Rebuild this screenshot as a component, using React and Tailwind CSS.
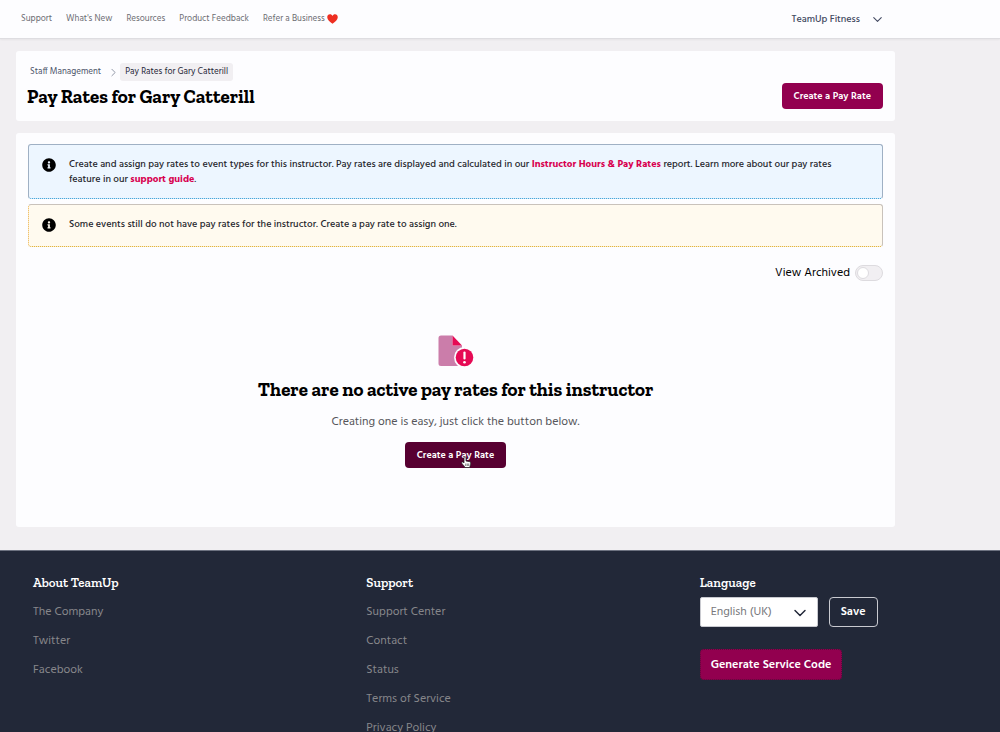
import { useState } from "react";
import { ChevronDown, ChevronRight } from "lucide-react";
import { FaInfoCircle } from "react-icons/fa";

const navLinks = ["Support", "What's New", "Resources", "Product Feedback"];

const aboutLinks = ["The Company", "Twitter", "Facebook"];

const supportLinks = ["Support Center", "Contact", "Status", "Terms of Service", "Privacy Policy"];

export default function App() {
  const [archived, setArchived] = useState(false);

  return (
    <div className="min-h-screen overflow-hidden bg-[#f1eff2] font-['Hind','Noto_Sans',sans-serif] text-black">
      <TopBar />

      <main className="mr-[105px] ml-4 mt-3 mb-[23px] flex flex-col gap-3">
        {/* PAGE HEADER */}
        <section className="flex items-end justify-between rounded-[3px] bg-[#fdfdff] p-3 pl-[11px]">
          <div>
            <nav aria-label="Breadcrumb" className="flex items-center text-[9px] leading-[18px]">
              <a href="#staff" className="ml-[3px] text-[#4b5268]">Staff Management</a>
              <ChevronRight size={13} strokeWidth={1.75} className="ml-[6px] text-[#8d93a3]" />
              <span className="rounded-[3px] bg-[#f1eff2] px-[5px] text-[#1f2637]">Pay Rates for Gary Catterill</span>
            </nav>
            <h1 className="mt-1 font-['Roboto_Slab','Zilla_Slab','Liberation_Serif',serif] text-[19px] leading-6 font-bold">
              Pay Rates for Gary Catterill
            </h1>
          </div>
          <button className="h-[26px] rounded bg-[#92004f] px-3 text-[10px] font-semibold text-white">
            Create a Pay Rate
          </button>
        </section>

        {/* PAY RATES */}
        <section className="rounded-[3px] bg-[#fdfdff] px-3 pt-[11px] pb-[59px]">
          <div className="flex flex-col gap-[5px]">
            <Notice className="min-h-[55px] border-[#9fb0c4] border-b-[#2496d2] bg-[#edf6ff]">
              Create and assign pay rates to event types for this instructor. Pay rates are displayed and calculated in our{" "}
              <a href="#report" className="font-bold text-[#d8004f]">Instructor Hours &amp; Pay Rates</a> report. Learn more
              about our pay rates feature in our <a href="#guide" className="font-bold text-[#d8004f]">support guide</a>.
            </Notice>
            <Notice className="min-h-[43px] border-[#c9c2bb] border-b-[#dca518] border-l-[#ecb043] [border-left-style:dotted] bg-[#fffaef]">
              Some events still do not have pay rates for the instructor. Create a pay rate to assign one.
            </Notice>
          </div>

          <label className="mt-[18px] flex h-4 items-center justify-end gap-[5px] text-[12px]">
            View Archived
            <input
              type="checkbox"
              role="switch"
              checked={archived}
              onChange={(e) => setArchived(e.target.checked)}
              className="flex h-4 w-7 appearance-none items-center rounded-full border border-[#dddbdf] bg-[#f1eff2] px-px before:h-3 before:w-3 before:rounded-full before:border before:border-[#dddbdf] before:bg-white before:content-[''] checked:justify-end checked:bg-[#92004f]"
            />
          </label>

          <div className="mt-[54px] flex flex-col items-center">
            <EmptyIcon />
            <h2 className="mt-[11px] font-['Roboto_Slab','Zilla_Slab','Liberation_Serif',serif] text-[19px] leading-6 font-bold">
              There are no active pay rates for this instructor
            </h2>
            <p className="mt-[11px] text-[12px] leading-[18px] text-[#55555a]">
              Creating one is easy, just click the button below.
            </p>
            <button className="relative mt-[11px] h-[26px] rounded bg-[#570031] px-3 text-[10px] font-semibold text-white">
              Create a Pay Rate
              <HandPointer />
            </button>
          </div>
        </section>
      </main>

      <Footer />
    </div>
  );
}

function TopBar() {
  return (
    <header className="flex h-[39px] items-center justify-between border-b border-[#dedde1] bg-[#fdfdff] pr-[115px] pl-[21px] shadow-xs">
      <nav className="flex items-center gap-[14px] text-[9px] leading-[11px] text-[#6c6c72]">
        {navLinks.map((link) => <a key={link} href="#nav">{link}</a>)}
        <a href="#refer" className="flex items-center gap-[2px]">
          Refer a Business
          <svg width="11" height="10" viewBox="0 0 12 11">
            <path d="M6 10.8C3 8.600.2 6.300.2 3.500.2 1.600 1.500.3 3.200.3 4.500.3 5.500 1 6 2.100 6.500 1 7.500.3 8.800.3c1.700 0 3 1.300 3 3.200C11.800 6.300 9 8.600 6 10.800z" fill="#ee2f22" />
          </svg>
        </a>
      </nav>
      <button className="flex items-center gap-[10px] text-[10px] font-medium text-[#434a62]">
        TeamUp Fitness
        <ChevronDown size={15} strokeWidth={1.75} />
      </button>
    </header>
  );
}

function Notice({ className, children }) {
  return (
    <div className={`flex rounded-[3px] border [border-bottom-style:dotted] pt-3 pl-[13px] ${className}`}>
      <FaInfoCircle size={14} className="mt-px shrink-0" />
      <p className="ml-[13px] max-w-[780px] text-[10px] leading-[15px] font-medium text-[#26262c]">{children}</p>
    </div>
  );
}

function EmptyIcon() {
  return (
    <svg width="36" height="32" viewBox="0 0 36 32">
      <path d="M3 .5h11.500v10H24V31H3A2.500 2.500 0 0 1 .5 28.500V3A2.500 2.500 0 0 1 3 .5z" fill="#cb7daa" />
      <path d="M14.500.5 24 10.500h-9.500z" fill="#e60a55" />
      <circle cx="26.500" cy="22.500" r="10.500" fill="#fdfdff" />
      <circle cx="26.500" cy="22.500" r="8.800" fill="#e60a55" />
      <path d="M26.500 17.500v6" stroke="#fff" strokeWidth="2.200" strokeLinecap="round" />
      <circle cx="26.500" cy="27.200" r="1.300" fill="#fff" />
    </svg>
  );
}

function HandPointer() {
  return (
    <svg width="10" height="12" viewBox="0 0 20 24" className="absolute top-[14px] left-[56px]">
      <path
        d="M6 14V3.500a2 2 0 0 1 4 0V10l8 1.500c1 .3 1.500 1 1.500 2.500 0 4-1.500 5-2 9H8c-1-3-4-5-6.500-8.500C.5 12.500 3 11 4.500 12.500z"
        fill="#fff"
        stroke="#222"
        strokeWidth="1.500"
      />
      <path d="M9.500 15v5M12.500 15v5M15.500 15v5" stroke="#222" strokeWidth="1.200" />
    </svg>
  );
}

function Footer() {
  return (
    <footer className="grid grid-cols-3 border-t border-[#6d7280] bg-[#222838] pt-[23px] pb-6 text-[12px] text-[#87878b]">
      <FooterColumn title="About TeamUp" links={aboutLinks} />
      <FooterColumn title="Support" links={supportLinks} />
      <div className="pl-[33px]">
        <FooterTitle>Language</FooterTitle>
        <form className="mt-[5px] flex gap-[11px]" onSubmit={(e) => e.preventDefault()}>
          <div className="relative">
            <select
              aria-label="Language"
              className="h-[30px] w-[118px] appearance-none rounded-[2px] border border-[#c9cad0] bg-white px-[10px] text-[12px] text-[#77777b]"
            >
              <option>English (UK)</option>
            </select>
            <ChevronDown size={20} strokeWidth={1.75} className="pointer-events-none absolute top-[6px] right-2 text-[#222838]" />
          </div>
          <button className="h-[30px] rounded border border-[#c9cad0] px-[11px] font-semibold text-white">Save</button>
        </form>
        <button className="mt-[22px] h-[31px] rounded border border-dotted border-[#5a0a3a] bg-[#92004f] px-[10px] font-semibold text-white">
          Generate Service Code
        </button>
      </div>
    </footer>
  );
}

function FooterTitle({ children }) {
  return <h3 className="font-['Roboto_Slab','Zilla_Slab','Liberation_Serif',serif] text-[13px] leading-[18px] font-semibold text-white">{children}</h3>;
}

function FooterColumn({ title, links }) {
  return (
    <div className="pl-[33px]">
      <FooterTitle>{title}</FooterTitle>
      <ul className="mt-[6px] leading-[29px]">
        {links.map((link) => <li key={link}><a href="#footer">{link}</a></li>)}
      </ul>
    </div>
  );
}
